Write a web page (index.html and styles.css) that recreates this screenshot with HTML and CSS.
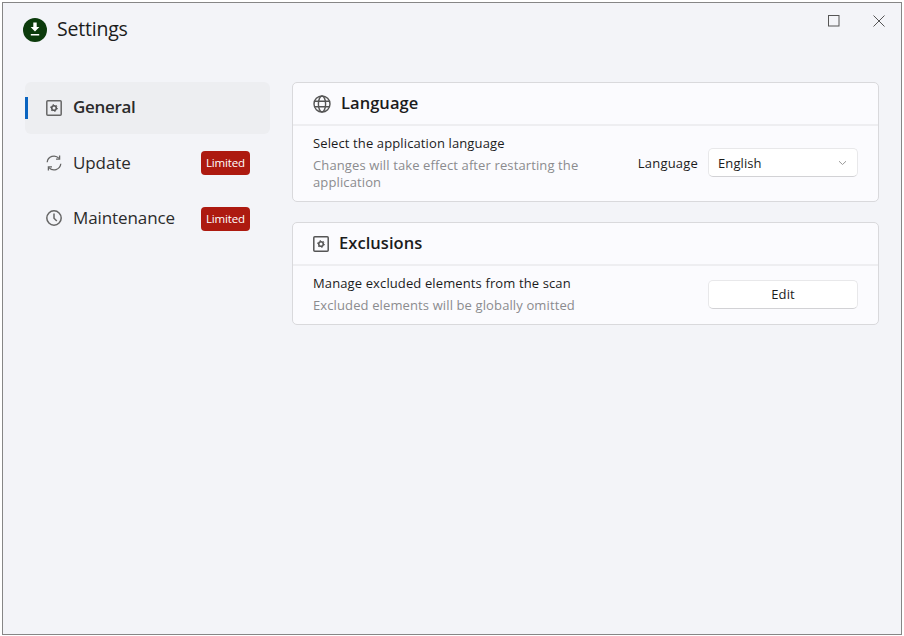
FILE: index.html
```html
<!DOCTYPE html>
<html lang="en">
<head>
    <meta charset="UTF-8">
    <meta name="viewport" content="width=device-width, initial-scale=1.0">
    <title>Settings</title>
    <link rel="stylesheet" href="styles.css">
</head>
<body>
<div class="window">
    <header class="titlebar">
        <div class="app-title">
            <svg class="logo" width="24" height="24" viewBox="0 0 24 24">
                <circle cx="12" cy="12" r="12" fill="#0c3b0c"/>
                <path d="M10.300 4.500h3.400V9h2.700L12 13.600 7.600 9h2.700z" fill="#fff"/>
                <rect x="7.800" y="16" width="8.400" height="1.500" fill="#fff"/>
            </svg>
            <span class="app-name">Settings</span>
        </div>
        <div class="caption-buttons">
            <svg width="12" height="12" viewBox="0 0 12 12"><rect x="0.500" y="0.500" width="10.500" height="10.500" fill="none" stroke="#555"/></svg>
            <svg width="12" height="12" viewBox="0 0 12 12"><path d="M0.500 0.500L11.500 11.500M11.500 0.500L0.500 11.500" fill="none" stroke="#555"/></svg>
        </div>
    </header>
    <div class="content">
        <nav class="sidebar">
            <a class="nav-item active">
                <svg class="nav-icon" width="16" height="16" viewBox="0 0 16 16">
                    <rect x="0.800" y="0.800" width="14.400" height="14.400" rx="1" fill="none" stroke="#666" stroke-width="1.500"/>
                    <circle cx="8" cy="8" r="2.300" fill="none" stroke="#555" stroke-width="1.600"/>
                    <circle cx="8" cy="8" r="3.500" fill="none" stroke="#555" stroke-width="1" stroke-dasharray="1.300 2.365"/>
                </svg>
                <span class="nav-label">General</span>
            </a>
            <a class="nav-item">
                <svg class="nav-icon" width="16" height="16" viewBox="0 0 16 16">
                    <path d="M1.200 7.200A6.800 6.800 0 0 1 13 3.400M14.800 8.800A6.800 6.800 0 0 1 3 12.600" fill="none" stroke="#666" stroke-width="1.300"/>
                    <path d="M13.600 0.600V4.200H10M2.400 15.400V11.800H6" fill="none" stroke="#666" stroke-width="1.300"/>
                </svg>
                <span class="nav-label">Update</span>
                <span class="badge">Limited</span>
            </a>
            <a class="nav-item">
                <svg class="nav-icon" width="16" height="16" viewBox="0 0 16 16">
                    <circle cx="8" cy="8" r="7.200" fill="none" stroke="#666" stroke-width="1.500"/>
                    <path d="M8 3.600V8.300L10.800 11" fill="none" stroke="#666" stroke-width="1.500"/>
                </svg>
                <span class="nav-label">Maintenance</span>
                <span class="badge">Limited</span>
            </a>
        </nav>
        <main class="panels">
            <section class="card">
                <div class="card-header">
                    <svg width="18" height="18" viewBox="0 0 18 18" fill="none" stroke="#555" stroke-width="1.400">
                        <circle cx="9" cy="9" r="8"/>
                        <ellipse cx="9" cy="9" rx="3.600" ry="8"/>
                        <path d="M1.600 6.200H16.400M1.600 11.800H16.400"/>
                    </svg>
                    <h2>Language</h2>
                </div>
                <div class="card-body body-language">
                    <div class="card-text">
                        <p>Select the application language</p>
                        <p class="hint">Changes will take effect after restarting the application</p>
                    </div>
                    <div class="field">
                        <label>Language</label>
                        <div class="select">
                            <span>English</span>
                            <svg width="9" height="6" viewBox="0 0 9 6"><path d="M1 1.200L4.500 4.500L8 1.200" fill="none" stroke="#999"/></svg>
                        </div>
                    </div>
                </div>
            </section>
            <section class="card">
                <div class="card-header">
                    <svg width="16" height="16" viewBox="0 0 16 16">
                        <rect x="0.800" y="0.800" width="14.400" height="14.400" rx="1" fill="none" stroke="#555" stroke-width="1.500"/>
                        <circle cx="8" cy="8" r="2.300" fill="none" stroke="#555" stroke-width="1.600"/>
                        <circle cx="8" cy="8" r="3.500" fill="none" stroke="#555" stroke-width="1" stroke-dasharray="1.300 2.365"/>
                    </svg>
                    <h2>Exclusions</h2>
                </div>
                <div class="card-body body-exclusions">
                    <div class="card-text">
                        <p>Manage excluded elements from the scan</p>
                        <p class="hint">Excluded elements will be globally omitted</p>
                    </div>
                    <button class="btn">Edit</button>
                </div>
            </section>
        </main>
    </div>
</div>
</body>
</html>
```

FILE: styles.css
```css
html, body {
    height: 100%;
}
body {
    margin: 0;
    padding: 2px 2px 1px 2px;
    box-sizing: border-box;
    background: #fff;
    font-family: "Open Sans", "Noto Sans", sans-serif;
    color: #1c1c1c;
}
.window {
    box-sizing: border-box;
    height: 100%;
    border: 1px solid #868686;
    background: #f3f4f8;
    display: flex;
    flex-direction: column;
}
.titlebar {
    display: flex;
    justify-content: space-between;
    align-items: flex-start;
    padding: 13px 16px 0 20px;
    height: 64px;
    box-sizing: border-box;
}
.app-title {
    display: flex;
    align-items: center;
    gap: 10px;
    font-size: 19.500px;
    line-height: 26px;
    letter-spacing: -0.200px;
}
.app-name {
    padding-bottom: 2px;
}
.logo {
    flex: none;
}
.caption-buttons {
    display: flex;
    gap: 33px;
    margin-top: -1px;
}
.content {
    display: flex;
    padding: 15px 22px 0 22px;
    gap: 22px;
}
.sidebar {
    width: 245px;
    flex: none;
    display: flex;
    flex-direction: column;
    gap: 3px;
}
.nav-item {
    position: relative;
    height: 52px;
    display: flex;
    align-items: center;
    gap: 11px;
    padding: 0 20px 0 21px;
    border-radius: 6px;
    font-size: 17px;
    letter-spacing: -0.100px;
    color: #2b2b2b;
}
.nav-label {
    padding-bottom: 2px;
}
.nav-item.active {
    background: #edeef1;
    font-weight: 600;
    letter-spacing: -0.300px;
}
.nav-item.active .nav-label {
    padding-bottom: 4px;
}
.nav-item.active::before {
    content: "";
    position: absolute;
    left: 0;
    top: 15px;
    width: 3px;
    height: 22px;
    background: #0a64c0;
}
.nav-icon {
    flex: none;
}
.badge {
    margin-left: auto;
    background: #ad1a10;
    color: #fff;
    font-size: 11.500px;
    letter-spacing: -0.150px;
    border-radius: 4px;
    padding: 0 5px;
    height: 24px;
    line-height: 23px;
}
.nav-item:last-child .badge {
    margin-top: 2px;
}
.panels {
    flex: 1;
    display: flex;
    flex-direction: column;
    gap: 20px;
}
.card {
    border: 1px solid #d9d9dc;
    border-radius: 5px;
    background: #fbfbfe;
}
.card-header {
    height: 41px;
    display: flex;
    align-items: center;
    gap: 10px;
    padding: 0 20px;
    border-bottom: 2px solid #eeeef1;
}
.card-header h2 {
    margin: 0;
    padding-bottom: 2px;
    font-size: 16.500px;
    font-weight: 600;
    letter-spacing: 0.050px;
}
.card-body {
    box-sizing: border-box;
    display: flex;
    justify-content: space-between;
    align-items: center;
    padding: 0 20px 2px;
}
.body-language {
    height: 75px;
}
.body-exclusions {
    height: 58px;
}
.card-text {
    width: 290px;
    font-size: 13px;
    letter-spacing: 0.120px;
}
.card-text p {
    margin: 0;
    line-height: 17px;
}
.card-text .hint {
    margin-top: 5px;
    color: #8b8b8e;
}
.field {
    display: flex;
    align-items: center;
    gap: 10px;
    font-size: 13px;
    letter-spacing: 0.200px;
}
.select, .btn {
    box-sizing: border-box;
    width: 150px;
    height: 29px;
    border: 1px solid #e8e8ea;
    border-bottom-color: #d2d2d5;
    border-radius: 5px;
    background: #fff;
    font-family: inherit;
    font-size: 13px;
    letter-spacing: 0.100px;
    color: #1c1c1c;
}
.select {
    display: flex;
    align-items: center;
    justify-content: space-between;
    padding: 0 10px 0 9px;
}
```
